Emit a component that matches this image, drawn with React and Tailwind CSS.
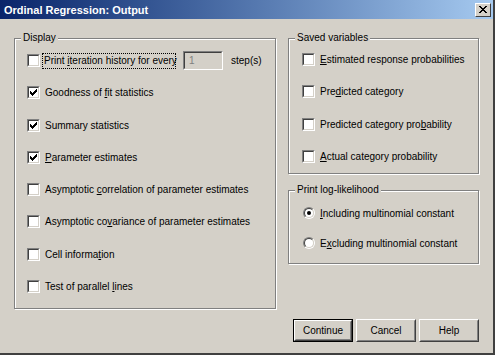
import { useState } from "react"

const font = { fontFamily: '"Liberation Sans", Arial, sans-serif' }

function Check({ checked }) {
  return (
    <span className="block w-[13px] h-[13px] shrink-0 border border-t-[#808080] border-l-[#808080] border-b-white border-r-white">
      <span className="flex w-full h-full items-center justify-center bg-white border border-t-[#404040] border-l-[#404040] border-b-[#d4d0c8] border-r-[#d4d0c8]">
        {checked && (
          <svg width="7" height="7" viewBox="0 0 7 7" shapeRendering="crispEdges">
            <path d="M0 2h1v3h-1zM1 3h1v3h-1zM2 4h1v3h-1zM3 3h1v3h-1zM4 2h1v3h-1zM5 1h1v3h-1zM6 0h1v3h-1z" fill="#000" />
          </svg>
        )}
      </span>
    </span>
  )
}

function Radio({ checked }) {
  return (
    <span className="block w-[12px] h-[12px] shrink-0 rounded-full border border-t-[#808080] border-l-[#808080] border-b-white border-r-white">
      <span className="flex w-full h-full items-center justify-center rounded-full bg-white border border-t-[#404040] border-l-[#404040] border-b-[#d4d0c8] border-r-[#d4d0c8]">
        {checked && <span className="block w-[4px] h-[4px] rounded-full bg-black" />}
      </span>
    </span>
  )
}

function Group({ label, className, children }) {
  return (
    <div className={`relative border border-[#808080] shadow-[inset_1px_1px_0_#fff,1px_1px_0_#fff] ${className}`}>
      <span className="absolute -top-[8px] left-[6px] px-[2px] bg-[#d4d0c8] text-[10px] leading-[14px] text-black">
        {label}
      </span>
      {children}
    </div>
  )
}

// label with one underlined mnemonic letter
function Label({ pre, key_, post }) {
  return (
    <span className="whitespace-nowrap">
      {pre}
      <span className="underline underline-offset-[1px]">{key_}</span>
      {post}
    </span>
  )
}

function CheckRow({ checked, children }) {
  return (
    <div className="flex items-center h-[13px] gap-[4px]">
      <Check checked={checked} />
      <span className="px-[1px] text-[10px] leading-[13px]">{children}</span>
    </div>
  )
}

function Button({ children, isDefault }) {
  return (
    <button
      className={`w-[60px] h-[23px] text-[10px] text-black bg-[#d4d0c8] ${
        isDefault ? "border border-black" : ""
      }`}
    >
      <span className="flex w-full h-full items-center justify-center border border-t-white border-l-white border-b-[#404040] border-r-[#404040]">
        <span className="flex w-full h-full items-center justify-center border border-t-[#d4d0c8] border-l-[#d4d0c8] border-b-[#808080] border-r-[#808080]">
          {children}
        </span>
      </span>
    </button>
  )
}

export default function App() {
  const [display] = useState([
    { checked: true, pre: "Goodness of ", k: "f", post: "it statistics" },
    { checked: true, pre: "Summary statistics", k: "", post: "" },
    { checked: true, pre: "", k: "P", post: "arameter estimates" },
    { checked: false, pre: "Asymptotic ", k: "c", post: "orrelation of parameter estimates" },
    { checked: false, pre: "Asymptotic co", k: "v", post: "ariance of parameter estimates" },
    { checked: false, pre: "Cell informa", k: "t", post: "ion" },
    { checked: false, pre: "Test of parallel ", k: "l", post: "ines" },
  ])

  const saved = [
    { pre: "", k: "E", post: "stimated response probabilities" },
    { pre: "Pre", k: "d", post: "icted category" },
    { pre: "Predicted category pro", k: "b", post: "ability" },
    { pre: "", k: "A", post: "ctual category probability" },
  ]

  return (
    <div
      className="w-[495px] h-[355px] flex flex-col bg-[#d4d0c8] text-black border-r-2 border-b-2 border-r-[#404040] border-b-[#404040]"
      style={font}
    >
      {/* title bar */}
      <div className="h-[19px] shrink-0 flex items-center justify-between pl-[4px] pr-[2px] bg-linear-to-r from-[#0a246a] to-[#a6caf0]">
        <span className="text-white font-bold text-[11px] leading-[14px]">Ordinal Regression: Output</span>
        <span className="w-[16px] h-[14px] bg-[#d4d0c8] border border-t-white border-l-white border-b-[#404040] border-r-[#404040] flex items-center justify-center">
          <svg width="8" height="7" viewBox="0 0 8 7" shapeRendering="crispEdges">
            <path d="M0 0h2v1h-2zM1 1h2v1h-2zM2 2h4v1h-4zM3 3h2v1h-2zM2 4h4v1h-4zM1 5h2v1h-2zM0 6h2v1h-2zM6 0h2v1h-2zM5 1h2v1h-2zM5 5h2v1h-2zM6 6h2v1h-2z" fill="#000" />
          </svg>
        </span>
      </div>

      {/* body */}
      <div className="flex gap-[12px] pl-[14px] pt-[19px]">
        <Group label="Display" className="w-[262px] h-[271px]">
          <div className="flex flex-col gap-[19.3px] pl-[12px] pt-[15px]">
            <div className="flex items-center h-[13px]">
              <Check checked={false} />
              <span className="ml-[2px] w-[134px] h-[16px] px-[1px] whitespace-nowrap border border-dotted border-black text-[10px] leading-[14px]">
                Print <span className="underline underline-offset-[1px]">i</span>teration history for every
              </span>
              <span className="ml-[7px] w-[40px] h-[19px] shrink-0 border border-t-[#808080] border-l-[#808080] border-b-white border-r-white">
                <span className="flex w-full h-full items-center pl-[4px] border border-t-[#404040] border-l-[#404040] border-b-[#d4d0c8] border-r-[#d4d0c8] text-[10px] text-[#808080]">
                  1
                </span>
              </span>
              <span className="ml-[8px] text-[10px] leading-[13px]">step(s)</span>
            </div>
            {display.map((r, i) => (
              <CheckRow key={i} checked={r.checked}>
                <Label pre={r.pre} key_={r.k} post={r.post} />
              </CheckRow>
            ))}
          </div>
        </Group>

        <div className="w-[191px] flex flex-col">
          <Group label="Saved variables" className="h-[136px]">
            <div className="flex flex-col gap-[19.3px] pl-[13px] pt-[14px]">
              {saved.map((r, i) => (
                <CheckRow key={i} checked={false}>
                  <Label pre={r.pre} key_={r.k} post={r.post} />
                </CheckRow>
              ))}
            </div>
          </Group>

          <Group label="Print log-likelihood" className="mt-[16px] h-[74px]">
            <div className="flex flex-col gap-[18px] pl-[14px] pt-[16px]">
              <div className="flex items-center h-[12px] gap-[5px]">
                <Radio checked />
                <span className="text-[10px] leading-[13px]">
                  <Label pre="" key_="I" post="ncluding multinomial constant" />
                </span>
              </div>
              <div className="flex items-center h-[12px] gap-[5px]">
                <Radio checked={false} />
                <span className="text-[10px] leading-[13px]">
                  <Label pre="E" key_="x" post="cluding multinomial constant" />
                </span>
              </div>
            </div>
          </Group>

          <div className="mt-[55px] flex justify-end gap-[3px]">
            <Button isDefault>Continue</Button>
            <Button>Cancel</Button>
            <Button>Help</Button>
          </div>
        </div>
      </div>
    </div>
  )
}
